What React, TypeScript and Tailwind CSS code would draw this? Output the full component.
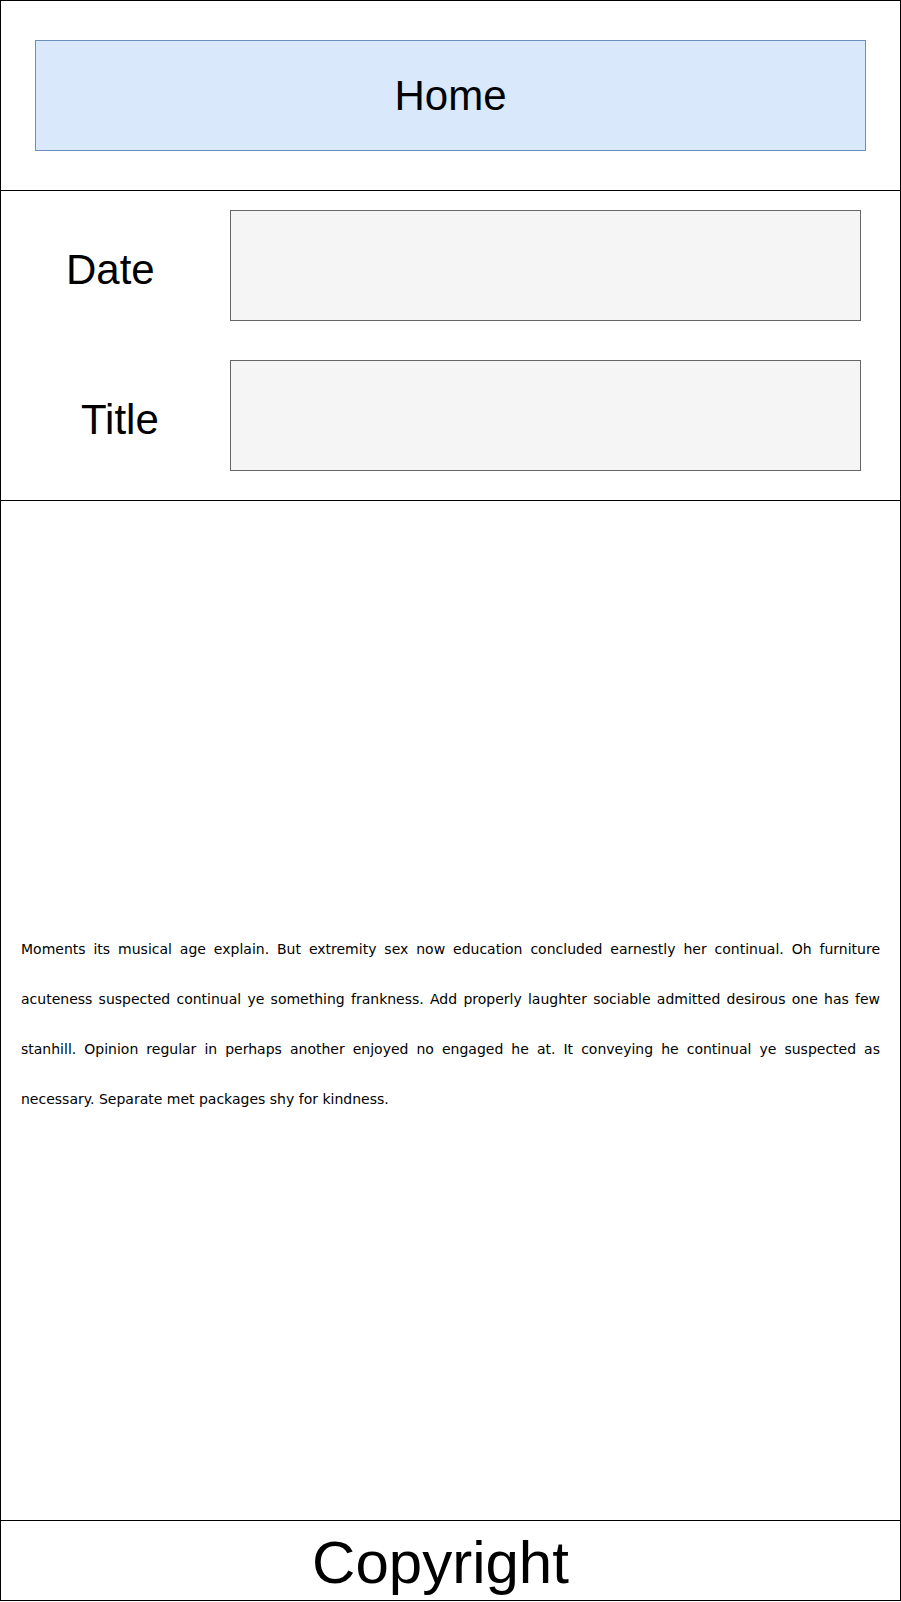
import React from 'react';

const body =
  'Moments its musical age explain. But extremity sex now education concluded earnestly her continual. Oh furniture acuteness suspected continual ye something frankness. Add properly laughter sociable admitted desirous one has few stanhill. Opinion regular in perhaps another enjoyed no engaged he at. It conveying he continual ye suspected as necessary. Separate met packages shy for kindness.';

const Field: React.FC<{ label: string; offset: string }> = ({ label, offset }) => (
  <div className="flex items-center h-[111px]">
    <div className="w-[229px] shrink-0">
      <span className={`block text-[42px] leading-none text-black pt-[8px] ${offset}`}>{label}</span>
    </div>
    <div className="w-[631px] h-[111px] bg-[#f5f5f5] border border-[#666666]" />
  </div>
);

export default function App() {
  return (
    <div className="w-[901px] h-[1601px] bg-white border border-black flex flex-col font-['Liberation_Sans',Arial,sans-serif]">
      {/* Header */}
      <div className="h-[190px] border-b border-black pt-[39px] pl-[34px] shrink-0">
        <div className="w-[831px] h-[111px] bg-[#dae8fc] border border-[#6c8ebf] flex items-center justify-center">
          <span className="text-[42px] leading-none text-black">Home</span>
        </div>
      </div>

      {/* Date / Title */}
      <div className="h-[310px] border-b border-black pt-[19px] shrink-0 flex flex-col gap-[39px]">
        <Field label="Date" offset="ml-[65px]" />
        <Field label="Title" offset="ml-[80px]" />
      </div>

      {/* Body */}
      <div className="h-[1020px] border-b border-black shrink-0 flex items-center pt-[26px] px-[20px]">
        <p className="w-full text-justify text-[14px] leading-[50px] text-black font-['DejaVu_Sans',Verdana,sans-serif]">
          {body}
        </p>
      </div>

      {/* Footer */}
      <div className="flex-1 flex items-center justify-center pr-[20px]">
        <span className="text-[60px] leading-none text-black pt-[4px]">Copyright</span>
      </div>
    </div>
  );
}
